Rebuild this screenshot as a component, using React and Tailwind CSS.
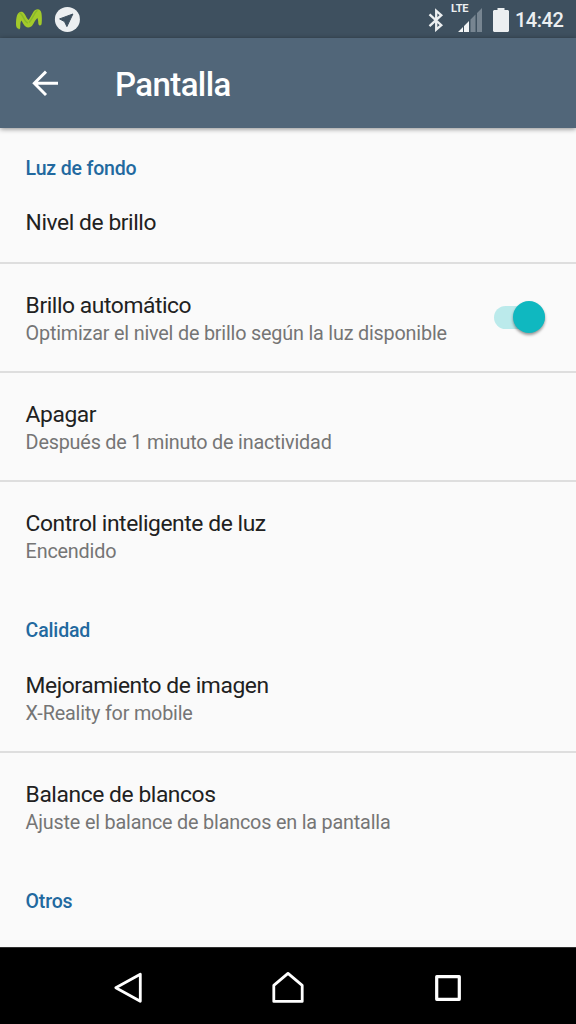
import { useState } from "react";

const SECTIONS = [
    {
        title: "Luz de fondo",
        items: [
            { title: "Nivel de brillo" },
            {
                title: "Brillo automático",
                summary: "Optimizar el nivel de brillo según la luz disponible",
                toggle: true,
            },
            { title: "Apagar", summary: "Después de 1 minuto de inactividad" },
            { title: "Control inteligente de luz", summary: "Encendido" },
        ],
    },
    {
        title: "Calidad",
        items: [
            { title: "Mejoramiento de imagen", summary: "X-Reality for mobile" },
            {
                title: "Balance de blancos",
                summary: "Ajuste el balance de blancos en la pantalla",
            },
        ],
    },
    { title: "Otros", items: [] },
];

function CarrierLogo() {
    return (
        <svg width="28" height="24" viewBox="0 0 28 24">
            <path
                d="M4.7 21.8C2.6 21.6 2 19.5 2 17c0-3 .2-6 1-8.5C4 5.8 5.500 4.7 7 4.7c1.600 0 2.500.6 3.600 2.400 1.300 2.100 2.300 4.400 3.900 5.900 2-2.200 3-5 4.800-8 1.200-1.900 2.600-2.700 4.200-2.700 2.500 0 3.600 1.700 4 4.200.4 3 .5 6.500.2 9.700-.2 1.500-.8 2.300-2 2.200-1.500-.2-1.400-1.900-1.500-3.600-.1-1.500-.3-2.800-.8-3.800-1.900 1.600-3.200 4.400-4.600 6.700-1.100 1.800-2.700 2.700-4.600 2.700-2.100 0-3.300-1.100-4.400-2.900-1-1.500-1.700-3-2.600-4-.7 1.500-.9 3-.9 4.700 0 1.800.2 4.100-1.600 4.300z"
                fill="#a3ca2a"
            />
            <path
                d="M6 6.2c2.500.3 4 8 7.500 9.600M23 3.8c-2 .8-4.500 8-7.500 11.200"
                fill="none"
                stroke="#88b82a"
                strokeWidth="1.4"
                strokeLinecap="round"
            />
        </svg>
    );
}

function TelegramIcon() {
    return (
        <svg width="26" height="26" viewBox="0 0 26 26">
            <circle cx="13.4" cy="13.4" r="12.5" fill="#eceff1" />
            <path
                d="M18.9 8 5.6 12.9l4.9 2.7 2.4 5z"
                fill="#3e505f"
                stroke="#3e505f"
                strokeWidth="1"
                strokeLinejoin="round"
            />
        </svg>
    );
}

function BluetoothIcon() {
    return (
        <svg width="16" height="24" viewBox="0 0 16 24" fill="none" stroke="#eceff1" strokeWidth="2.3">
            <path d="M1.5 6.3 13.3 17.2 8.2 21.6V2.8l5.1 4.4L1.5 18.1" />
        </svg>
    );
}

function SignalIcon() {
    return (
        <svg width="24" height="24" viewBox="0 0 24 24">
            <path d="M0 24 5 19v5zM6 18l5-5v11H6z" fill="#f2f4f5" />
            <path d="m12.5 11.5 5-5V24h-5zM19 5l5-5v24h-5z" fill="#778591" />
        </svg>
    );
}

function StatusBar() {
    return (
        <div className="flex h-[38px] shrink-0 items-center bg-[#3e505f] pr-3 pl-[14px] text-[#eceff1]">
            <CarrierLogo />
            <div className="ml-3">
                <TelegramIcon />
            </div>
            <div className="ml-auto flex items-center pt-px">
                <BluetoothIcon />
                <div className="relative ml-[14px]">
                    <SignalIcon />
                    <span className="absolute -top-[6px] -left-[7px] text-[11px] leading-[14px] font-bold tracking-[-0.1px]">
                        LTE
                    </span>
                </div>
                <svg className="ml-[11px]" width="16" height="24" viewBox="0 0 16 24">
                    <path d="M4.5 0h7v2H15l1 1v20l-1 1H1l-1-1V3l1-1h3.5z" fill="#eceff1" />
                </svg>
                <span className="ml-[6px] w-[49px] pt-px text-[20px] leading-6 font-medium tracking-[-0.5px] whitespace-nowrap">
                    14:42
                </span>
            </div>
        </div>
    );
}

function AppBar() {
    return (
        <header className="z-10 flex h-[90px] shrink-0 items-center bg-[#516679] pl-8 text-white shadow-[0_1px_5px_rgba(0,0,0,0.45)]">
            <button aria-label="Atrás" className="w-[83px]">
                <svg width="26" height="26" viewBox="0 0 26 26" fill="none" stroke="white" strokeWidth="2.9">
                    <path d="M26 13.3H2.5M14 1.6 2.3 13.3 14 25" />
                </svg>
            </button>
            <h1 className="pt-1 text-[33px] leading-10 font-medium tracking-[-0.6px]">Pantalla</h1>
        </header>
    );
}

function Toggle() {
    const [on, setOn] = useState(true);

    return (
        <button
            role="switch"
            aria-checked={on}
            onClick={() => setOn(!on)}
            className={`mr-[31px] flex h-[23px] w-[51px] items-center rounded-full ${on ? "justify-end bg-[#bbeaeb]" : "justify-start bg-gray-300"}`}
        >
            <span
                className={`size-8 shrink-0 rounded-full shadow-[0_2px_3px_rgba(0,0,0,0.4)] ${on ? "bg-[#0fb8c0]" : "bg-gray-50"}`}
            />
        </button>
    );
}

function PreferenceItem({ item, divider }) {
    return (
        <div
            className={`flex items-center border-b-2 pl-[25.6px] ${item.summary ? "h-[108.8px]" : "h-[82.4px]"} ${divider ? "border-[#dedede]" : "border-transparent"}`}
        >
            <div className={`min-w-0 flex-1 ${item.summary ? "pt-1" : "pt-0.5"}`}>
                <div className="text-[22.8px] leading-[29px] tracking-[-0.42px] text-[#212121]">
                    {item.title}
                </div>
                {item.summary && (
                    <div className="text-[19.8px] leading-[27px] tracking-[-0.19px] whitespace-nowrap text-[#757575]">
                        {item.summary}
                    </div>
                )}
            </div>
            {item.toggle && <Toggle />}
        </div>
    );
}

// Bottom system bar: back, home, recents
function NavBar() {
    return (
        <nav className="flex h-[77px] shrink-0 items-center justify-center gap-32 border-t border-[#303030] bg-black pt-1">
            <svg width="32" height="32" viewBox="0 0 32 32" fill="none" stroke="white" strokeWidth="2.8" strokeLinejoin="round">
                <path d="M28.3 2.3v27L3.8 15.8z" />
            </svg>
            <svg width="32" height="32" viewBox="0 0 32 32" fill="none" stroke="white" strokeWidth="2.8" strokeLinejoin="round">
                <path d="M1.8 29.4V13.4L16 1.4 30.2 13.4v16z" />
            </svg>
            <svg width="32" height="32" viewBox="0 0 32 32" fill="none" stroke="white" strokeWidth="3.2" strokeLinejoin="round">
                <path d="M4.7 4.7h22.6v22.6H4.7z" />
            </svg>
        </nav>
    );
}

export default function App() {
    return (
        <div className="flex h-screen w-full flex-col overflow-hidden bg-[#fafafa] font-['Roboto',sans-serif]">
            <StatusBar />
            <AppBar />
            <main className="min-h-0 flex-1 overflow-hidden">
                {SECTIONS.map((section) => (
                    <section key={section.title}>
                        <h2 className="h-[53.6px] pt-[27.5px] pl-[25.6px] text-[19.5px] leading-[26px] font-medium tracking-[-0.16px] text-[#22699f]">
                            {section.title}
                        </h2>
                        {section.items.map((item, i) => (
                            <PreferenceItem
                                key={item.title}
                                item={item}
                                divider={i < section.items.length - 1}
                            />
                        ))}
                    </section>
                ))}
            </main>
            <NavBar />
        </div>
    );
}
